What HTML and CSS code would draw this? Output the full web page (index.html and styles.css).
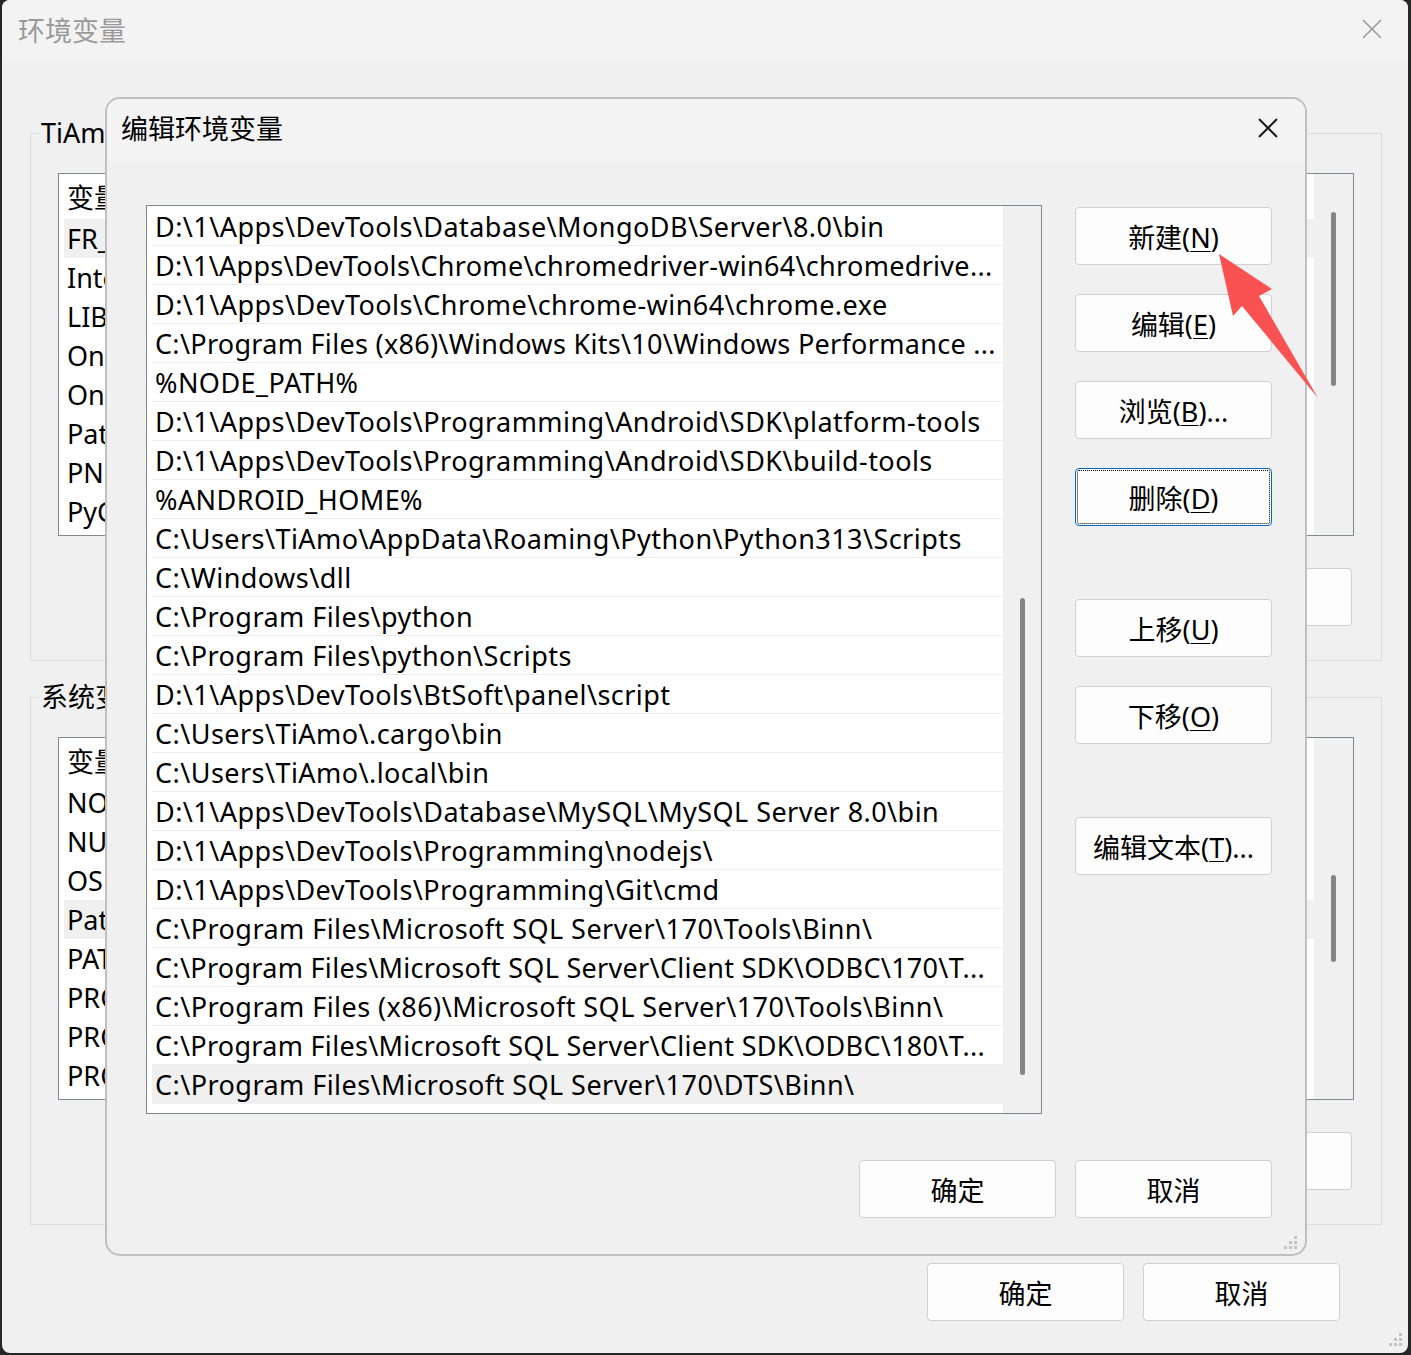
FILE: index.html
```html
<!DOCTYPE html>
<html lang="zh-CN">
<head>
<meta charset="UTF-8">
<title>环境变量</title>
<link rel="stylesheet" href="styles.css">
</head>
<body>
<div class="window">
    <div class="titlebar">
        <span class="title inactive">环境变量</span>
        <svg class="close" width="20" height="20" viewBox="0 0 20 20"><path d="M1 1L19 19M19 1L1 19" stroke="#9a9a9a" stroke-width="1.6"/></svg>
    </div>
    <div class="window-body">
        <fieldset class="group">
            <legend>TiAmo 的用户变量(<u>U</u>)</legend>
            <div class="listview">
                <div class="lv-rows">
                    <div class="lv-head"><span class="col-name">变量</span><span>值</span></div>
                    <div class="lv-row selected">FR_HOME</div>
                    <div class="lv-row">IntelliJ IDEA</div>
                    <div class="lv-row">LIB</div>
                    <div class="lv-row">OneDrive</div>
                    <div class="lv-row">OneDriveConsumer</div>
                    <div class="lv-row">Path</div>
                    <div class="lv-row">PNPM_HOME</div>
                    <div class="lv-row">PyCharm</div>
                    <div class="lv-row">TEMP</div>
                </div>
                <div class="vscroll user-scroll"><div class="thumb"></div></div>
            </div>
            <div class="btn-row">
                <button class="btn">新建(<u>N</u>)...</button>
                <button class="btn">编辑(<u>E</u>)...</button>
                <button class="btn">删除(<u>D</u>)</button>
            </div>
        </fieldset>
        <fieldset class="group">
            <legend>系统变量(<u>S</u>)</legend>
            <div class="listview">
                <div class="lv-rows">
                    <div class="lv-head"><span class="col-name">变量</span><span>值</span></div>
                    <div class="lv-row">NODE_PATH</div>
                    <div class="lv-row">NUMBER_OF_PROCESSORS</div>
                    <div class="lv-row">OS</div>
                    <div class="lv-row selected">Path</div>
                    <div class="lv-row">PATHEXT</div>
                    <div class="lv-row">PROCESSOR_ARCHITECTURE</div>
                    <div class="lv-row">PROCESSOR_IDENTIFIER</div>
                    <div class="lv-row">PROCESSOR_LEVEL</div>
                    <div class="lv-row">PROCESSOR_REVISION</div>
                </div>
                <div class="vscroll system-scroll"><div class="thumb"></div></div>
            </div>
            <div class="btn-row">
                <button class="btn">新建(<u>W</u>)...</button>
                <button class="btn">编辑(<u>I</u>)...</button>
                <button class="btn">删除(<u>L</u>)</button>
            </div>
        </fieldset>
        <div class="footer">
            <button class="btn">确定</button>
            <button class="btn">取消</button>
        </div>
    </div>
    <div class="grip-row window-grip">
        <svg width="15" height="15" viewBox="0 0 15 15"><g fill="#c4c4c4"><rect x="11" y="0" width="3" height="3"/><rect x="6" y="5" width="3" height="3"/><rect x="11" y="5" width="3" height="3"/><rect x="1" y="10" width="3" height="3"/><rect x="6" y="10" width="3" height="3"/><rect x="11" y="10" width="3" height="3"/></g></svg>
    </div>
</div>

<div class="dialog">
    <div class="dialog-titlebar">
        <span class="title">编辑环境变量</span>
        <svg class="close" width="20" height="20" viewBox="0 0 20 20"><path d="M1 1L19 19M19 1L1 19" stroke="#1a1a1a" stroke-width="2"/></svg>
    </div>
    <div class="dialog-body">
        <div class="pathlist">
            <div class="paths">
                <div class="path">D:\1\Apps\DevTools\Database\MongoDB\Server\8.0\bin</div>
                <div class="path fit">D:\1\Apps\DevTools\Chrome\chromedriver-win64\chromedrive...</div>
                <div class="path">D:\1\Apps\DevTools\Chrome\chrome-win64\chrome.exe</div>
                <div class="path fit">C:\Program Files (x86)\Windows Kits\10\Windows Performance ...</div>
                <div class="path">%NODE_PATH%</div>
                <div class="path">D:\1\Apps\DevTools\Programming\Android\SDK\platform-tools</div>
                <div class="path">D:\1\Apps\DevTools\Programming\Android\SDK\build-tools</div>
                <div class="path">%ANDROID_HOME%</div>
                <div class="path">C:\Users\TiAmo\AppData\Roaming\Python\Python313\Scripts</div>
                <div class="path">C:\Windows\dll</div>
                <div class="path">C:\Program Files\python</div>
                <div class="path">C:\Program Files\python\Scripts</div>
                <div class="path">D:\1\Apps\DevTools\BtSoft\panel\script</div>
                <div class="path">C:\Users\TiAmo\.cargo\bin</div>
                <div class="path">C:\Users\TiAmo\.local\bin</div>
                <div class="path">D:\1\Apps\DevTools\Database\MySQL\MySQL Server 8.0\bin</div>
                <div class="path">D:\1\Apps\DevTools\Programming\nodejs\</div>
                <div class="path">D:\1\Apps\DevTools\Programming\Git\cmd</div>
                <div class="path">C:\Program Files\Microsoft SQL Server\170\Tools\Binn\</div>
                <div class="path fit">C:\Program Files\Microsoft SQL Server\Client SDK\ODBC\170\T...</div>
                <div class="path">C:\Program Files (x86)\Microsoft SQL Server\170\Tools\Binn\</div>
                <div class="path fit">C:\Program Files\Microsoft SQL Server\Client SDK\ODBC\180\T...</div>
                <div class="path selected">C:\Program Files\Microsoft SQL Server\170\DTS\Binn\</div>
            </div>
            <div class="vscroll path-scroll"><div class="thumb"></div></div>
        </div>
        <div class="side">
            <button class="btn">新建(<u>N</u>)</button>
            <button class="btn">编辑(<u>E</u>)</button>
            <button class="btn">浏览(<u>B</u>)...</button>
            <button class="btn focused">删除(<u>D</u>)</button>
            <button class="btn later">上移(<u>U</u>)</button>
            <button class="btn">下移(<u>O</u>)</button>
            <button class="btn later">编辑文本(<u>T</u>)...</button>
        </div>
    </div>
    <div class="dialog-footer">
        <button class="btn">确定</button>
        <button class="btn">取消</button>
    </div>
    <div class="grip-row dialog-grip">
        <svg width="15" height="15" viewBox="0 0 15 15"><g fill="#c4c4c4"><rect x="11" y="0" width="3" height="3"/><rect x="6" y="5" width="3" height="3"/><rect x="11" y="5" width="3" height="3"/><rect x="1" y="10" width="3" height="3"/><rect x="6" y="10" width="3" height="3"/><rect x="11" y="10" width="3" height="3"/></g></svg>
    </div>
</div>

<!-- 标注箭头 -->
<svg class="arrow" width="115" height="160" viewBox="0 0 115 160">
    <polygon points="9,9 62,44 49,51 108,153 32,61 23,71" fill="#fa5252"/>
</svg>
</body>
</html>
```

FILE: styles.css
```css
* {
    box-sizing: border-box;
}
body {
    margin: 0;
    width: 1411px;
    height: 1355px;
    overflow: hidden;
    position: relative;
    background-color: #262626;
    font-family: "Noto Sans", "Noto Sans CJK SC", sans-serif;
    font-size: 27px;
    color: #000;
}
u {
    text-underline-offset: 3px;
    text-decoration-thickness: 1px;
}
.window {
    margin: 0 3px 0 2px;
    height: 1353px;
    background-color: #f0f0f0;
    border-radius: 8px;
    overflow: hidden;
}
.titlebar {
    height: 62px;
    background-color: #f3f3f3;
    display: flex;
    align-items: center;
    justify-content: space-between;
    padding: 0 26px 4px 16px;
}
.title.inactive {
    color: #9a9a9a;
}
.close {
    display: block;
}
.window-body {
    padding: 0 26px 0 28px;
}
.group {
    margin: 53px 0 0;
    padding: 0 0 34px;
    border: 1px solid #dcdcdc;
    min-width: 0;
}
.group + .group {
    margin-top: 18px;
}
.group legend {
    margin-left: 8px;
    padding: 0 2px;
    line-height: 36px;
}
.listview {
    margin: 22px 27px 0;
    height: 363px;
    border: 1px solid #828790;
    background-color: #fff;
    display: flex;
}
.lv-rows {
    flex: 1;
    overflow: hidden;
}
.lv-head {
    height: 45px;
    display: flex;
    align-items: center;
    padding-left: 8px;
}
.lv-head .col-name {
    width: 420px;
}
.lv-row {
    height: 39px;
    line-height: 39px;
    margin-left: 5px;
    padding-left: 3px;
    white-space: nowrap;
}
.lv-row.selected, .path.selected {
    background-color: #f0f0f0;
}
.vscroll {
    width: 39px;
    background-color: #f0f0f0;
}
.thumb {
    width: 5px;
    margin: 0 auto;
    background-color: #858585;
    border-radius: 3px;
}
.user-scroll {
    padding-top: 38px;
}
.user-scroll .thumb {
    height: 174px;
}
.system-scroll {
    padding-top: 137px;
}
.system-scroll .thumb {
    height: 87px;
}
.btn {
    width: 197px;
    height: 58px;
    padding: 0;
    background-color: #fdfdfd;
    border: 1px solid #d0d0d0;
    border-radius: 4px;
    font: inherit;
    color: #000;
}
.btn.focused {
    border-color: #0067c0;
    outline: 1px dotted #000;
    outline-offset: -3px;
}
.btn-row {
    display: flex;
    justify-content: flex-end;
    gap: 19px;
    margin: 32px 29px 0 27px;
}
.footer {
    display: flex;
    justify-content: flex-end;
    gap: 19px;
    margin: 38px 42px 0 0;
}
.grip-row {
    display: flex;
    justify-content: flex-end;
}
.grip-row svg {
    display: block;
}
.window-grip {
    margin-top: 12px;
    padding-right: 5px;
}

/* 编辑环境变量 对话框 */
.dialog {
    position: absolute;
    left: 105px;
    top: 97px;
    width: 1202px;
    height: 1159px;
    background-color: #f0f0f0;
    border: 2px solid #bfbfbf;
    border-radius: 15px;
    overflow: hidden;
}
.dialog-titlebar {
    height: 63px;
    background-color: #f3f3f3;
    display: flex;
    align-items: center;
    justify-content: space-between;
    padding: 0 27px 6px 14px;
}
.dialog-body {
    display: flex;
    gap: 33px;
    padding: 43px 0 0 39px;
}
.pathlist {
    width: 896px;
    height: 909px;
    border: 1px solid #828790;
    background-color: #fff;
    display: flex;
}
.paths {
    flex: 1;
    padding: 1px 0 0 5px;
    overflow: hidden;
}
.path {
    height: 39px;
    line-height: 40px;
    padding-left: 3px;
    border-bottom: 1px solid #ececec;
    white-space: nowrap;
    overflow: hidden;
    letter-spacing: 0.45px;
}
.path.fit {
    letter-spacing: 0.3px;
}
.path.selected {
    border-bottom: none;
}
.path-scroll {
    width: 38px;
    padding-top: 392px;
}
.path-scroll .thumb {
    height: 477px;
}
.side {
    display: flex;
    flex-direction: column;
    gap: 29px;
    padding-top: 2px;
}
.side .later {
    margin-top: 44px;
}
.dialog-footer {
    display: flex;
    justify-content: flex-end;
    gap: 19px;
    margin-top: 46px;
    padding-right: 33px;
}
.dialog-grip {
    margin-top: 18px;
    padding-right: 7px;
}
.arrow {
    position: absolute;
    left: 1210px;
    top: 245px;
}
```
